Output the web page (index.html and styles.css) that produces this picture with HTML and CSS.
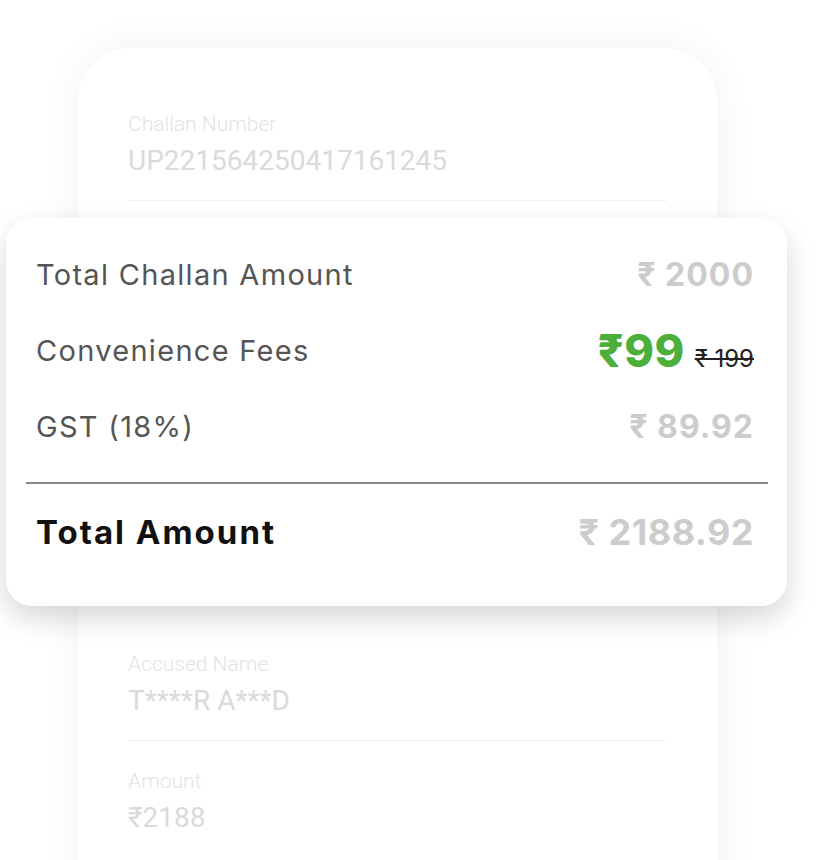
FILE: index.html
```html
<!DOCTYPE html>
<html>
<head>
<meta charset="utf-8">
<link rel="stylesheet" href="styles.css">
</head>
<body>
<div class="stage">
  <div class="back-card">
    <div class="field">
      <div class="label">Challan Number</div>
      <div class="value">UP221564250417161245</div>
    </div>
    <div class="covered">
      <div class="field">
        <div class="label">Vehicle Number</div>
        <div class="value">UP00XX0000</div>
      </div>
      <div class="field">
        <div class="label">Date</div>
        <div class="value">00-00-0000</div>
      </div>
      <div class="field">
        <div class="label">Offence</div>
        <div class="value">—</div>
      </div>
    </div>
    <div class="field">
      <div class="label">Accused Name</div>
      <div class="value">T****R A***D</div>
    </div>
    <div class="field last">
      <div class="label">Amount</div>
      <div class="value">₹2188</div>
    </div>
  </div>

  <div class="summary">
    <div class="row">
      <span class="row-label">Total Challan Amount</span>
      <span class="amt">₹ 2000</span>
    </div>
    <div class="row">
      <span class="row-label">Convenience Fees</span>
      <span class="fee"><span class="fee-new">₹99</span><s class="fee-old">₹ 199</s></span>
    </div>
    <div class="row">
      <span class="row-label">GST (18%)</span>
      <span class="amt">₹ 89.92</span>
    </div>
    <div class="divider"></div>
    <div class="row total">
      <span class="total-label">Total Amount</span>
      <span class="amt total-amt">₹ 2188.92</span>
    </div>
  </div>
</div>
</body>
</html>
```

FILE: styles.css
```css
html, body {
  margin: 0;
  padding: 0;
  background: #ffffff;
  overflow: hidden;
}
.stage {
  position: relative;
  width: 816px;
  height: 860px;
  overflow: hidden;
  font-family: Roboto, "Noto Sans", sans-serif;
}
.back-card {
  margin: 48px 0 0 78px;
  width: 639px;
  height: 900px;
  box-sizing: border-box;
  padding: 62px 50px 0 50px;
  background: #ffffff;
  border-radius: 52px 52px 0 0;
  box-shadow: 0 0 40px rgba(0, 0, 0, 0.06);
}
.field {
  padding: 0 0 20px 0;
  border-bottom: 1px solid #f2f2f2;
  margin-bottom: 26px;
}
.covered {
  visibility: hidden;
  height: 423px;
  overflow: hidden;
}
.field.last {
  border-bottom: none;
}
.label {
  font-size: 21px;
  font-weight: 300;
  color: #e3e3e3;
  line-height: 28px;
}
.value {
  font-size: 28px;
  font-weight: 400;
  color: #dadada;
  line-height: 38px;
  margin-top: 4px;
}
.summary {
  position: absolute;
  left: 6px;
  top: 218px;
  width: 781px;
  height: 388px;
  box-sizing: border-box;
  padding: 18px 33px 0 20px;
  background: #ffffff;
  border-radius: 26px;
  box-shadow: 0 12px 28px rgba(0, 0, 0, 0.16);
  font-family: Inter, "Noto Sans", sans-serif;
}
.row {
  display: flex;
  justify-content: space-between;
  align-items: center;
  height: 76px;
  padding-left: 10px;
}
.row-label {
  font-size: 29px;
  color: #555555;
  font-weight: 400;
  letter-spacing: 1.3px;
}
.amt {
  font-size: 32px;
  font-weight: 700;
  color: #cccccc;
  letter-spacing: 1px;
}
.fee {
  display: flex;
  align-items: baseline;
  gap: 10px;
}
.fee-new {
  font-size: 45px;
  font-weight: 800;
  color: #4caf3a;
  letter-spacing: 0.5px;
}
.fee-old {
  font-size: 24px;
  color: #222222;
  font-weight: 400;
}
.divider {
  height: 2px;
  background: #8a8a8a;
  margin: 18px -14px 13px 0;
}
.total {
  height: 70px;
}
.total-label {
  font-size: 33px;
  font-weight: 700;
  color: #111111;
  letter-spacing: 2px;
}
.total-amt {
  font-size: 36px;
  letter-spacing: 0.5px;
}
```
